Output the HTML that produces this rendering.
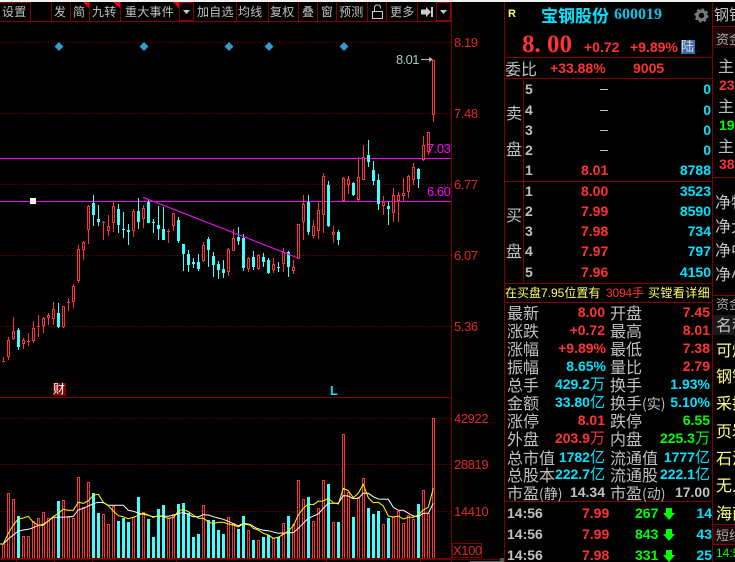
<!DOCTYPE html>
<html><head><meta charset="utf-8">
<style>
html,body{margin:0;padding:0;background:#000;}
#r{position:relative;width:735px;height:562px;overflow:hidden;background:#000;font-family:"Liberation Sans","WenQuanYi Zen Hei","Noto Sans CJK SC",sans-serif;color:#c0c0c0;}
#r>*{position:absolute;}
.t{white-space:nowrap;line-height:1;}
.b{font-weight:bold;font-size:14px;}
.c{font-size:15px;color:#c0c0c0;font-family:"WenQuanYi Zen Hei","Noto Sans CJK SC",sans-serif;letter-spacing:0;}
.R{color:#ff3333}.C{color:#00e4ff}.G{color:#00ff00}.Y{color:#ffff66}.W{color:#c0c0c0}
.hl{background:#800000;height:1px;}
.vl{background:#800000;width:1px;}
.tb{top:6px;height:15px;font-size:12px;letter-spacing:.25px;line-height:1;color:#c0c0c0;font-family:"WenQuanYi Zen Hei","Noto Sans CJK SC",sans-serif;white-space:nowrap;}
.ax{font-size:13px;letter-spacing:-.4px;color:#e02828;line-height:1;left:454px;white-space:nowrap;}
.dash{width:8px;height:1px;background:#c0c0c0;left:600px;}
.fy{color:#ffff88 !important;}
</style></head><body>
<div id="r">
<div style="left:0;top:0;width:735px;height:2px;background:#f0f0f0"></div>
<svg id="s" width="735" height="562" style="left:0;top:0" shape-rendering="crispEdges"></svg>

<!-- toolbar -->
<div class="hl" style="left:0;top:21px;width:451px"></div>
<div class="hl" style="left:0;top:2px;width:30px"></div>
<div class="vl" style="left:30px;top:2px;height:19px"></div>
<div class="vl" style="left:51px;top:2px;height:19px"></div>
<div class="vl" style="left:70px;top:2px;height:19px"></div>
<div class="vl" style="left:89px;top:2px;height:19px"></div>
<div class="vl" style="left:120px;top:2px;height:19px"></div>
<div class="vl" style="left:179px;top:2px;height:19px"></div>
<div class="vl" style="left:193px;top:2px;height:19px"></div>
<div class="vl" style="left:236px;top:2px;height:19px"></div>
<div class="vl" style="left:268px;top:2px;height:19px"></div>
<div class="vl" style="left:298px;top:2px;height:19px"></div>
<div class="vl" style="left:317px;top:2px;height:19px"></div>
<div class="vl" style="left:336px;top:2px;height:19px"></div>
<div class="vl" style="left:367px;top:2px;height:19px"></div>
<div class="vl" style="left:386px;top:2px;height:19px"></div>
<div class="vl" style="left:417px;top:2px;height:19px"></div>
<div class="vl" style="left:436px;top:2px;height:19px"></div>
<div class="vl" style="left:451px;top:2px;height:19px"></div>
<div class="tb" style="left:2px">设置</div>
<div class="tb" style="left:54px">发</div>
<div class="tb" style="left:73px">简</div>
<div class="tb" style="left:92px">九转</div>
<div class="tb" style="left:125px">重大事件</div>
<div class="tb" style="left:197px">加自选</div>
<div class="tb" style="left:238px">均线</div>
<div class="tb" style="left:270px">复权</div>
<div class="tb" style="left:302px">叠</div>
<div class="tb" style="left:321px">窗</div>
<div class="tb" style="left:339px">预测</div>
<div class="tb" style="left:390px">更多</div>

<!-- chart labels -->
<div class="ax" style="top:36px">8.19</div>
<div class="ax" style="top:107px">7.48</div>
<div class="ax" style="top:178px">6.77</div>
<div class="ax" style="top:249px">6.07</div>
<div class="ax" style="top:320px">5.36</div>
<div class="ax" style="top:412px">42922</div>
<div class="ax" style="top:458px">28819</div>
<div class="ax" style="top:505px">14410</div>
<div class="ax" style="top:544px;left:453px">X100</div>
<div class="t" style="left:396px;top:53px;font-size:13px;letter-spacing:-.6px;color:#a8c8c0">8.01</div>
<div class="t" style="left:427px;top:142px;font-size:13px;letter-spacing:-.5px;color:#ff00ff">7.03</div>
<div class="t" style="left:427px;top:185px;font-size:13px;letter-spacing:-.5px;color:#ff00ff">6.60</div>
<div class="t" style="left:53px;top:383px;width:13px;height:13px;background:#800000;color:#fff;font-size:12px;font-family:'WenQuanYi Zen Hei',sans-serif;">财</div>
<div class="t" style="left:330px;top:384px;font-size:13px;font-weight:bold;color:#00e4ff">L</div>

<!-- right panel lines -->
<div class="vl" style="left:504px;top:2px;height:560px"></div>
<div class="vl" style="left:712px;top:2px;height:560px"></div>
<div class="hl" style="left:504px;top:57px;width:208px"></div>
<div class="hl" style="left:504px;top:78px;width:208px"></div>
<div class="vl" style="left:523px;top:78px;height:205px"></div>
<div class="hl" style="left:504px;top:181px;width:208px"></div>
<div class="hl" style="left:504px;top:283px;width:208px"></div>
<div class="hl" style="left:504px;top:302px;width:208px"></div>
<div class="hl" style="left:504px;top:501px;width:208px"></div>

<!-- header -->
<div class="t" style="left:508px;top:9px;font-size:11px;font-weight:bold;color:#ffff66">R</div>
<div class="t" style="left:541px;top:6px;font-size:17px;color:#00e4ff;font-family:'Noto Sans CJK SC',sans-serif;font-weight:bold;">宝钢股份</div>
<div class="t" style="left:614px;top:7px;font-size:16px;color:#00c8e8;font-family:'Liberation Serif',serif;font-weight:bold;">600019</div>
<svg width="15" height="15" viewBox="0 0 16 16" style="left:694px;top:8px"><circle cx="8" cy="8" r="4.6" fill="none" stroke="#777" stroke-width="3.4"/><circle cx="8" cy="8" r="6.4" fill="none" stroke="#777" stroke-width="2.4" stroke-dasharray="2.5 2.5"/></svg>
<div class="t" style="left:522px;top:32px;font-size:25px;color:#ff3333;font-weight:bold;font-family:'Liberation Serif',serif;">8. 00</div>
<div class="t b R" style="left:584px;top:40px;">+0.72</div>
<div class="t b R" style="left:630px;top:40px;">+9.89%</div>
<div class="t" style="left:681px;top:40px;width:14px;height:14px;background:#3a6aaa;color:#ddd;font-size:13px;font-family:'WenQuanYi Zen Hei',sans-serif;">陆</div>
<div class="t c" style="left:505px;top:60px;font-size:16px">委比</div>
<div class="t b R" style="left:550px;top:61px">+33.88%</div>
<div class="t b R" style="left:633px;top:61px">9005</div>

<!-- order book -->
<div class="t c" style="left:506px;top:104px;font-size:16px">卖</div>
<div class="t c" style="left:506px;top:140px;font-size:16px">盘</div>
<div class="t c" style="left:506px;top:206px;font-size:16px">买</div>
<div class="t c" style="left:506px;top:242px;font-size:16px">盘</div>
<div class="t b W" style="left:525px;top:82px">5</div>
<div class="t b W" style="left:525px;top:103px">4</div>
<div class="t b W" style="left:525px;top:123px">3</div>
<div class="t b W" style="left:525px;top:143px">2</div>
<div class="t b W" style="left:525px;top:163px">1</div>
<div class="t b W" style="left:525px;top:184px">1</div>
<div class="t b W" style="left:525px;top:204px">2</div>
<div class="t b W" style="left:525px;top:224px">3</div>
<div class="t b W" style="left:525px;top:244px">4</div>
<div class="t b W" style="left:525px;top:265px">5</div>
<div class="dash" style="top:89px"></div>
<div class="dash" style="top:110px"></div>
<div class="dash" style="top:130px"></div>
<div class="dash" style="top:150px"></div>
<div class="t b R" style="left:581px;top:163px">8.01</div>
<div class="t b R" style="left:581px;top:184px">8.00</div>
<div class="t b R" style="left:581px;top:204px">7.99</div>
<div class="t b R" style="left:581px;top:224px">7.98</div>
<div class="t b R" style="left:581px;top:244px">7.97</div>
<div class="t b R" style="left:581px;top:265px">7.96</div>
<div class="t b C" style="right:24px;top:82px">0</div>
<div class="t b C" style="right:24px;top:103px">0</div>
<div class="t b C" style="right:24px;top:123px">0</div>
<div class="t b C" style="right:24px;top:143px">0</div>
<div class="t b C" style="right:24px;top:163px">8788</div>
<div class="t b C" style="right:24px;top:184px">3523</div>
<div class="t b C" style="right:24px;top:204px">8590</div>
<div class="t b C" style="right:24px;top:224px">734</div>
<div class="t b C" style="right:24px;top:244px">797</div>
<div class="t b C" style="right:24px;top:265px">4150</div>

<div class="t Y" style="left:505px;top:287px;font-size:12px;">在买盘7.95位置有</div>
<div class="t R" style="left:606px;top:287px;font-size:12px;letter-spacing:-.2px">3094手</div>
<div class="t Y" style="left:648px;top:287px;font-size:12px;letter-spacing:.4px">买镗看详细</div>

<!-- stats -->
<div class="t c" style="left:507px;top:304px;font-size:16px">最新</div><div class="t b R" style="right:130px;top:305px">8.00</div>
<div class="t c" style="left:610px;top:304px;font-size:16px">开盘</div><div class="t b R" style="right:25px;top:305px">7.45</div>
<div class="t c" style="left:507px;top:322px;font-size:16px">涨跌</div><div class="t b R" style="right:130px;top:323px">+0.72</div>
<div class="t c" style="left:610px;top:322px;font-size:16px">最高</div><div class="t b R" style="right:25px;top:323px">8.01</div>
<div class="t c" style="left:507px;top:340px;font-size:16px">涨幅</div><div class="t b R" style="right:129px;top:341px">+9.89%</div>
<div class="t c" style="left:610px;top:340px;font-size:16px">最低</div><div class="t b R" style="right:25px;top:341px">7.38</div>
<div class="t c" style="left:507px;top:358px;font-size:16px">振幅</div><div class="t b C" style="right:129px;top:359px">8.65%</div>
<div class="t c" style="left:610px;top:358px;font-size:16px">量比</div><div class="t b R" style="right:25px;top:359px">2.79</div>
<div class="t c" style="left:507px;top:376px;font-size:16px">总手</div><div class="t b C" style="right:130px;top:377px">429.2<span style="font-weight:normal;font-size:15px">万</span></div>
<div class="t c" style="left:610px;top:376px;font-size:16px">换手</div><div class="t b C" style="right:25px;top:377px">1.93%</div>
<div class="t c" style="left:507px;top:394px;font-size:16px">金额</div><div class="t b C" style="right:130px;top:395px">33.80<span style="font-weight:normal;font-size:15px">亿</span></div>
<div class="t c" style="left:610px;top:394px;font-size:16px">换手<span style="font-size:14px">(实)</span></div><div class="t b C" style="right:25px;top:395px">5.10%</div>
<div class="t c" style="left:507px;top:412px;font-size:16px">涨停</div><div class="t b R" style="right:130px;top:413px">8.01</div>
<div class="t c" style="left:610px;top:412px;font-size:16px">跌停</div><div class="t b G" style="right:25px;top:413px">6.55</div>
<div class="t c" style="left:507px;top:430px;font-size:16px">外盘</div><div class="t b R" style="right:130px;top:431px">203.9<span style="font-weight:normal;font-size:15px">万</span></div>
<div class="t c" style="left:610px;top:430px;font-size:16px">内盘</div><div class="t b G" style="right:25px;top:431px">225.3<span style="font-weight:normal;font-size:15px">万</span></div>
<div class="t c" style="left:507px;top:449px;font-size:16px">总市值</div><div class="t b C" style="right:130px;top:450px">1782<span style="font-weight:normal;font-size:15px">亿</span></div>
<div class="t c" style="left:610px;top:449px;font-size:16px">流通值</div><div class="t b C" style="right:25px;top:450px">1777<span style="font-weight:normal;font-size:15px">亿</span></div>
<div class="t c" style="left:507px;top:466px;font-size:16px">总股本</div><div class="t b C" style="right:130px;top:467px">222.7<span style="font-weight:normal;font-size:15px">亿</span></div>
<div class="t c" style="left:610px;top:466px;font-size:16px">流通股</div><div class="t b C" style="right:25px;top:467px">222.1<span style="font-weight:normal;font-size:15px">亿</span></div>
<div class="t c" style="left:507px;top:484px;font-size:16px">市盈<span style="font-size:14px">(静)</span></div><div class="t b W" style="right:130px;top:485px">14.34</div>
<div class="t c" style="left:610px;top:484px;font-size:16px">市盈<span style="font-size:14px">(动)</span></div><div class="t b W" style="right:25px;top:485px">17.00</div>

<!-- trades -->
<div class="t b W" style="left:507px;top:506px">14:56</div><div class="t b R" style="left:582px;top:506px">7.99</div><div class="t b G" style="left:635px;top:506px">267</div><div class="t b C" style="right:23px;top:506px">14</div>
<div class="t b W" style="left:507px;top:527px">14:56</div><div class="t b R" style="left:582px;top:527px">7.99</div><div class="t b G" style="left:635px;top:527px">843</div><div class="t b C" style="right:23px;top:527px">43</div>
<div class="t b W" style="left:507px;top:548px">14:56</div><div class="t b R" style="left:582px;top:548px">7.98</div><div class="t b G" style="left:635px;top:548px">331</div><div class="t b C" style="right:23px;top:548px">25</div>
<svg width="12" height="12" viewBox="0 0 12 12" style="left:663px;top:508px"><path d="M3 0h6v5h3L6 12 0 5h3z" fill="#00ff00"/></svg>
<svg width="12" height="12" viewBox="0 0 12 12" style="left:663px;top:529px"><path d="M3 0h6v5h3L6 12 0 5h3z" fill="#00ff00"/></svg>
<svg width="12" height="12" viewBox="0 0 12 12" style="left:663px;top:550px"><path d="M3 0h6v5h3L6 12 0 5h3z" fill="#00ff00"/></svg>

<!-- far right column -->
<div style="left:713px;top:26px;width:22px;height:1px;background:#800000"></div>
<div style="left:713px;top:28px;width:22px;height:20px;background:#1c0808"></div>
<div style="left:713px;top:177px;width:22px;height:1px;background:#800000"></div>
<div style="left:713px;top:295px;width:22px;height:1px;background:#800000"></div>
<div style="left:713px;top:315px;width:22px;height:20px;background:#1a1a1a"></div>
<div style="left:713px;top:524px;width:22px;height:1px;background:#800000"></div>
<div style="left:713px;top:526px;width:22px;height:18px;background:#1c0808"></div>
<div style="left:713px;top:544px;width:22px;height:1px;background:#800000"></div>
<div id="fr" style="left:713px;top:0;width:22px;height:562px;overflow:hidden">
<div class="t c" style="position:absolute;left:1px;top:7px;font-size:15px">钢铁</div>
<div class="t c" style="position:absolute;left:3px;top:32px;font-size:13px;color:#aaa">资金</div>
<div class="t c" style="position:absolute;left:5px;top:57px;font-size:16px">主</div>
<div class="t b R" style="position:absolute;left:6px;top:78px">23</div>
<div class="t c" style="position:absolute;left:5px;top:97px;font-size:16px">主</div>
<div class="t b G" style="position:absolute;left:6px;top:118px">19</div>
<div class="t c" style="position:absolute;left:5px;top:137px;font-size:16px">主</div>
<div class="t b R" style="position:absolute;left:6px;top:157px">38</div>
<div class="t c" style="position:absolute;left:2px;top:193px;font-size:16px">净特</div>
<div class="t c" style="position:absolute;left:2px;top:217px;font-size:16px">净大</div>
<div class="t c" style="position:absolute;left:2px;top:241px;font-size:16px">净中</div>
<div class="t c" style="position:absolute;left:2px;top:265px;font-size:16px">净小</div>
<div class="t c" style="position:absolute;left:3px;top:297px;font-size:13px;color:#aaa">资金</div>
<div class="t c" style="position:absolute;left:3px;top:316px;font-size:16px">名称</div>
<div class="t c fy" style="position:absolute;left:3px;top:341px;font-size:16px">可燃</div>
<div class="t c fy" style="position:absolute;left:3px;top:367px;font-size:16px">钢铁</div>
<div class="t c fy" style="position:absolute;left:3px;top:394px;font-size:16px">采掘</div>
<div class="t c fy" style="position:absolute;left:3px;top:422px;font-size:16px">页岩</div>
<div class="t c fy" style="position:absolute;left:3px;top:449px;font-size:16px">石油</div>
<div class="t c fy" style="position:absolute;left:3px;top:476px;font-size:16px">无人</div>
<div class="t c fy" style="position:absolute;left:3px;top:504px;font-size:16px">海南</div>
<div class="t c" style="position:absolute;left:3px;top:528px;font-size:13px;color:#aaa">短线</div>
<div class="t" style="position:absolute;left:3px;top:547px;font-size:12px;color:#00ff00">14:5</div>
</div>
</div>

<script>
var s='';
function rect(x,y,w,h,f){s+='<rect x="'+x+'" y="'+y+'" width="'+w+'" height="'+h+'" fill="'+f+'"/>';}
function dots(y,x2){for(var x=0;x<x2;x+=3){rect(x,y,1,1,'#8a0000');}}
[42,113,184,255,326,418,464,511].forEach(function(y){dots(y,451);});
rect(451,2,1,560,'#800000');
rect(0,397,451,1,'#800000');
rect(0,558,451,1,'#800000');rect(0,559,504,1,'#600000');
[16,54,92,176,326,420].forEach(function(x){rect(x,559,1,3,'#800000');});
rect(470,561,30,1,'#666');rect(500,558,4,4,'#555');
rect(0,158,451,1,'#ff00ff');
rect(0,201,451,1,'#ff00ff');
rect(30,198,6,6,'#ffffff');

/* red corner flags */
s+='<polygon points="83,2 89,2 89,8" fill="#ff0000" shape-rendering="auto"/>';
s+='<polygon points="113,2 120,2 120,8" fill="#ff0000" shape-rendering="auto"/>';
s+='<polygon points="173,2 179,2 179,8" fill="#ff0000" shape-rendering="auto"/>';
/* toolbar dropdowns */
s+='<rect x="179.5" y="2.5" width="14" height="18" fill="none" stroke="#a00000"/>';
s+='<rect x="436.5" y="2.5" width="14" height="18" fill="none" stroke="#a00000"/>';
s+='<polygon points="183,10 190,10 186.5,14" fill="#ccc" shape-rendering="auto"/>';
s+='<polygon points="440,10 447,10 443.5,14" fill="#ccc" shape-rendering="auto"/>';
/* lock */
s+='<path d="M372.5 18.5V11.5H382.5V18.5H372.5ZM374.5 11V7.5Q374.5 5 377.5 5Q380.5 5 380.5 7.5V8.5" fill="none" stroke="#ccc" shape-rendering="auto"/>';
/* arrow-to-bar */
s+='<path d="M421 9.5H426V7L431 12L426 17V14.5H421Z" fill="#ccc" shape-rendering="auto"/>';
rect(431,7,2,10,'#ccc');
/* diamonds */
[59,144,229,269,344].forEach(function(x){s+='<polygon points="'+x+',42 '+(x+4.5)+',46.5 '+x+',51 '+(x-4.5)+',46.5" fill="#2f9ccc" shape-rendering="auto"/>';});

var A=[ // base 190
['r',502,512,513,516],['r',442,450,500,510],['r',381,424,447,450],['c',414,420,470,480],['r',445,451,461,477],['r',430,454,455,468],['r',393,415,452,458],['r',376,408,409,440],['r',380,385,407,428],['r',370,376,383,405],
['r',336,358,386,405],['c',339,369,411,414],['r',348,349,410,413],['r',324,336,337,362],['r',283,289,335,353],['r',166,178,272,278],['r',153,157,179,209],['r',45,48,119,161],['c',15,39,75,107],['c',45,87,95,107],
['r',94,97,98,149],['r',75,109,122,137],['r',35,49,98,126],['c',42,57,104,128],['c',67,118,119,143],['c',102,120,125,164],['r',58,64,122,140],['c',25,63,95,116],['r',46,55,86,113],['c',30,36,98,99],
['c',87,97,98,128],['c',48,105,116,150],['c',50,118,149,150],['r',117,123,124,158],['r',70,70,107,122],['c',82,90,152,159],['c',162,162,191,242],['c',180,192,224,245],['c',205,216,221,233],['c',193,216,237,242],
['r',156,165,212,215],['c',141,147,179,231],['c',186,198,224,261],['c',213,222,240,267],['c',209,237,249,263],['r',175,177,245,258],['r',118,145,182,183],['c',111,141,152,165],['c',132,144,234,243],['r',201,204,236,246]];
var B=[['c',48,65,97,105],['r',58,60,102,105],['c',55,65,80,95],['c',70,75,115,117],['r',68,87,105,113],['c',82,95,96,110],['r',40,50,88,112],['c',48,52,95,125],['r',75,95,107,118]]; // base 235, i=50..58
var C=[['r',283,283,387,387],['r',195,222,275,330],['c',195,215,306,315],['r',270,289,317,323],['r',215,240,302,327],['r',130,138,254,308],['c',153,165,288,291],['r',288,306,315,338],['c',300,306,330,345],
['r',141,144,213,213],['r',138,147,165,192],['c',155,159,196,198],['r',82,141,210,213],['r',45,82,149,150],['c',30,75,96,111],['c',93,120,153,165],['c',132,150,222,240],['r',198,216,228,255],['c',216,228,237,285],['r',174,195,249,276],['r',186,195,213,276],['r',144,189,198,213],['r',135,138,186,204],['r',99,111,150,165],['c',114,117,147,174],['r',18,45,90,92],['r',6,6,66,75]]; // base 130, i=59..

function candle(i,d,base){
  var x=3+5*i,col=d[0]=='r'?'#ff3333':'#40ffff';
  var hi=Math.round(base+d[1]/3),top=Math.round(base+d[2]/3),bot=Math.round(base+d[3]/3),lo=Math.round(base+d[4]/3);
  rect(x,hi,1,Math.max(lo-hi,1),col);
  var h=Math.max(bot-top,1);
  if(h<=1){rect(x-1,top,3,1,col);return;}
  if(d[0]=='r'){rect(x-1,top,3,h,col);if(h>2)rect(x,top+1,1,h-2,'#000');}
  else rect(x-1,top,3,h,col);
}
A.forEach(function(d,i){candle(i,d,190);});
B.forEach(function(d,i){candle(50+i,d,235);});
C.forEach(function(d,i){candle(59+i,d,130);});
/* big candle */
candle(86,['r',180,180,345,366],0);

/* 8.01 pointer */
rect(421,59,9,1,'#bbbbbb');
s+='<polygon points="433,59.5 429,57 429,62" fill="#bbb" shape-rendering="auto"/>';

/* volume */
var vA=[['r',432],['r',280],['r',298],['c',349],['r',409],['r',409],['r',364],['r',355],['r',337],['r',355],['r',352],['c',303],['r',301],['r',349],['r',354],['r',232],['r',322],['r',247],['c',280],['c',339],['r',343],['r',373],['r',318],['c',363],['c',354],['c',366],['r',352],['c',292],['r',336],['c',357],['c',411],['c',327],['c',315],['r',355],['r',343],['c',312],['c',309],['c',340],['c',411],['c',402],['r',316],['c',361],['c',361],['c',390],['c',402],['r',352],['r',370],['c',387],['c',348],['r',391],
['c',421],['r',421],['c',411],['c',406],['r',415],['c',411],['r',370],['c',349],['r',373],['r',241],['r',298],['c',292],['r',364],['r',325],['r',241],['c',252],['r',367],['c',366],['r',103],['r',276],['c',351],['r',292],['r',235],['c',325],['c',342],['c',334],['r',373],['c',354],['r',350],['r',334],['r',370],['r',346],['r',358],['c',313],['r',271],['r',340],['r',55]];
vA.forEach(function(d,i){
  var x=2+5*i,top=Math.round(400+d[1]/3),h=558-top;
  if(d[0]=='r'){rect(x,top,3,h,'#ff3333');if(h>1)rect(x+1,top+1,1,h-1,'#000');}
  else rect(x,top,3,h,'#40ffff');
});
function poly(a,x0){return a.map(function(q){return (x0+q[0]/3).toFixed(1)+','+(400+q[1]/3).toFixed(1);}).join(' ');}
var yA=[[0,432],[10,432],[25,400],[40,375],[55,357],[70,354],[85,349],[100,367],[115,376],[130,376],[145,363],[160,350],[175,340],[190,328],[205,331],[220,331],[235,307],[250,310],[265,303],[280,286],[295,283],[310,307],[325,317],[340,333],[355,347],[370,350],[385,356],[400,352],[415,346],[430,340],[445,345],[460,352],[475,347],[490,350],[505,355],[520,353],[535,333],[550,328],[565,335],[580,345],[595,355],[610,355],[625,365],[640,371],[655,367],[670,367],[685,372],[700,375],[715,381],[730,372],[750,375]];
var yB=[[0,375],[10,385],[25,390],[40,400],[55,405],[70,415],[85,412],[100,403],[115,393],[130,378],[145,345],[160,325],[175,312],[190,314],[205,304],[220,303],[235,295],[250,308],[265,312],[280,265],[295,272],[310,293],[325,280],[340,253],[355,293],[370,308],[385,307],[400,318],[415,348],[430,351],[445,348],[460,357],[475,352],[490,352],[505,345],[520,330],[535,322],[550,265]];
var wA=[[0,432],[10,432],[25,417],[40,405],[55,393],[70,390],[85,388],[100,383],[115,376],[130,373],[145,363],[160,352],[175,352],[205,351],[220,349],[235,330],[250,325],[265,318],[280,311],[295,307],[310,308],[325,316],[370,316],[385,331],[400,334],[415,339],[430,343],[445,346],[460,350],[475,348],[505,349],[520,346],[550,337],[580,350],[595,350],[610,344],[625,345],[640,350],[655,354],[670,358],[685,364],[700,371],[715,378],[730,370],[750,373]];
var wB=[[0,373],[20,385],[40,391],[55,392],[85,400],[115,398],[130,398],[145,385],[160,370],[175,355],[205,342],[220,325],[235,310],[265,310],[280,287],[295,288],[310,296],[325,295],[340,280],[355,280],[370,290],[385,297],[415,298],[430,322],[445,331],[460,331],[490,348],[505,350],[520,340],[535,340],[550,310]];
s+='<polyline fill="none" stroke="#ffffff" shape-rendering="auto" points="'+poly(wA,0)+' '+poly(wB,250)+'"/>';
s+='<polyline fill="none" stroke="#ffff00" shape-rendering="auto" points="'+poly(yA,0)+' '+poly(yB,250)+'"/>';
/* trendline */
s+='<line x1="143" y1="197.3" x2="298" y2="258" stroke="#e010e0" stroke-width="1.2" shape-rendering="auto"/>';
/* X100 box */
s+='<rect x="452.5" y="543.5" width="29" height="14" fill="none" stroke="#800000"/>';
document.getElementById('s').innerHTML=s;
</script>
</body></html>
